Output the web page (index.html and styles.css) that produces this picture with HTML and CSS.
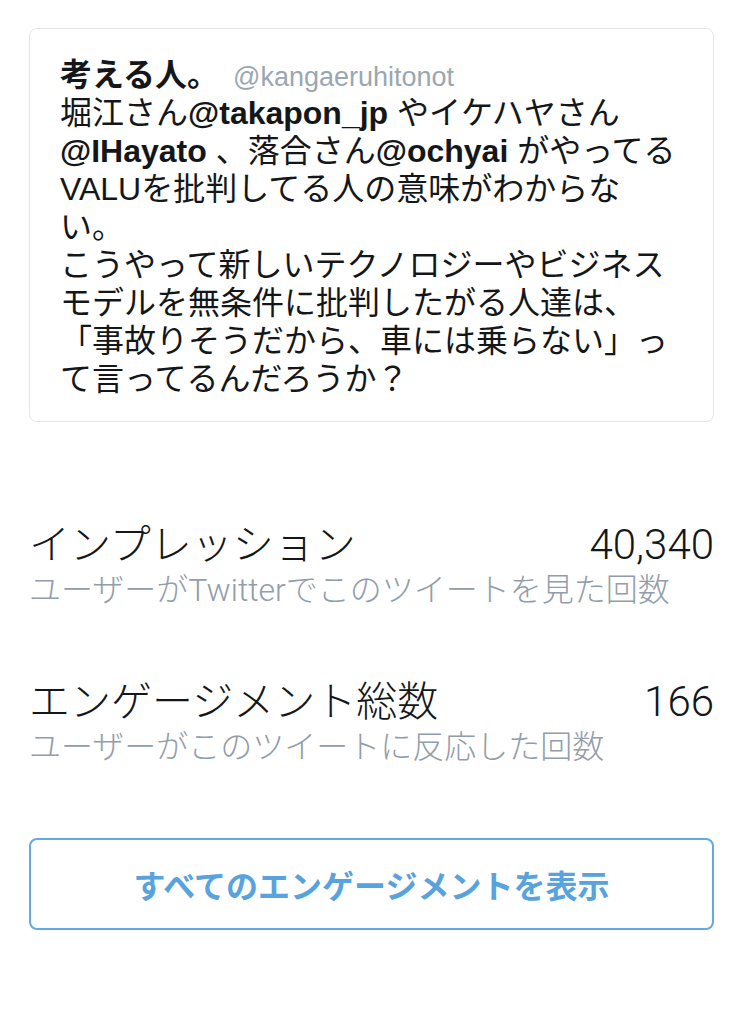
FILE: index.html
```html
<!DOCTYPE html>
<html lang="ja">
<head>
<meta charset="utf-8">
<link rel="stylesheet" href="styles.css">
</head>
<body>
<main class="page">
  <section class="tweet">
    <div class="tweet-head"><span class="name">考える人。</span><span class="handle">@kangaeruhitonot</span></div>
    <p class="tweet-body">堀江さん<b>@takapon_jp</b> やイケハヤさん<br><b>@IHayato</b> 、落合さん<b>@ochyai</b> がやってる<br>VALUを批判してる人の意味がわからな<br>い。<br>こうやって新しいテクノロジーやビジネス<br>モデルを無条件に批判したがる人達は、<br>「事故りそうだから、車には乗らない」っ<br>て言ってるんだろうか？</p>
  </section>

  <section class="stats">
    <div class="stat">
      <div class="stat-row"><span class="stat-title">インプレッション</span><span class="stat-value">40,340</span></div>
      <div class="stat-sub">ユーザーがTwitterでこのツイートを見た回数</div>
    </div>
    <div class="stat">
      <div class="stat-row"><span class="stat-title">エンゲージメント総数</span><span class="stat-value">166</span></div>
      <div class="stat-sub">ユーザーがこのツイートに反応した回数</div>
    </div>
  </section>

  <button class="all-btn" type="button">すべてのエンゲージメントを表示</button>
</main>
</body>
</html>
```

FILE: styles.css
```css
html, body {
  margin: 0;
  padding: 0;
  background: #ffffff;
}

body {
  font-family: "Liberation Sans", "Noto Sans CJK JP", sans-serif;
  color: #14171a;
}

.page {
  display: flex;
  flex-direction: column;
  padding: 28px 30px 0 29px;
}

.tweet {
  border: 1px solid #e3e6e8;
  border-radius: 8px;
  padding: 27px 20px 23px 30px;
}

.tweet-head {
  display: flex;
  align-items: baseline;
  gap: 14px;
  height: 38px;
  line-height: 38px;
}

.name {
  font-size: 32px;
  font-weight: 700;
}

.handle {
  font-size: 27px;
  color: #9aa7b2;
}

.tweet-body {
  margin: 0;
  font-size: 32px;
  line-height: 38px;
  white-space: nowrap;
}

.tweet-body b {
  font-weight: 700;
}

.stats {
  display: flex;
  flex-direction: column;
  gap: 67px;
  margin-top: 100px;
}

.stat-row {
  display: flex;
  justify-content: space-between;
  align-items: baseline;
  line-height: 46px;
}

.stat-title {
  font-size: 41px;
  font-weight: 300;
}

.stat-value {
  font-family: "Roboto", "Liberation Sans", sans-serif;
  font-size: 42px;
  font-weight: 300;
}

.stat-sub {
  font-family: "Roboto", "Noto Sans CJK JP", sans-serif;
  font-size: 32px;
  line-height: 44px;
  font-weight: 300;
  color: #919daa;
}

.all-btn {
  margin-top: 69px;
  height: 92px;
  border: 2px solid #63aae2;
  border-radius: 8px;
  background: #ffffff;
  color: #58a3de;
  font-family: "Liberation Sans", "Noto Sans CJK JP", sans-serif;
  font-size: 32px;
  font-weight: 700;
  padding: 0;
}
```
